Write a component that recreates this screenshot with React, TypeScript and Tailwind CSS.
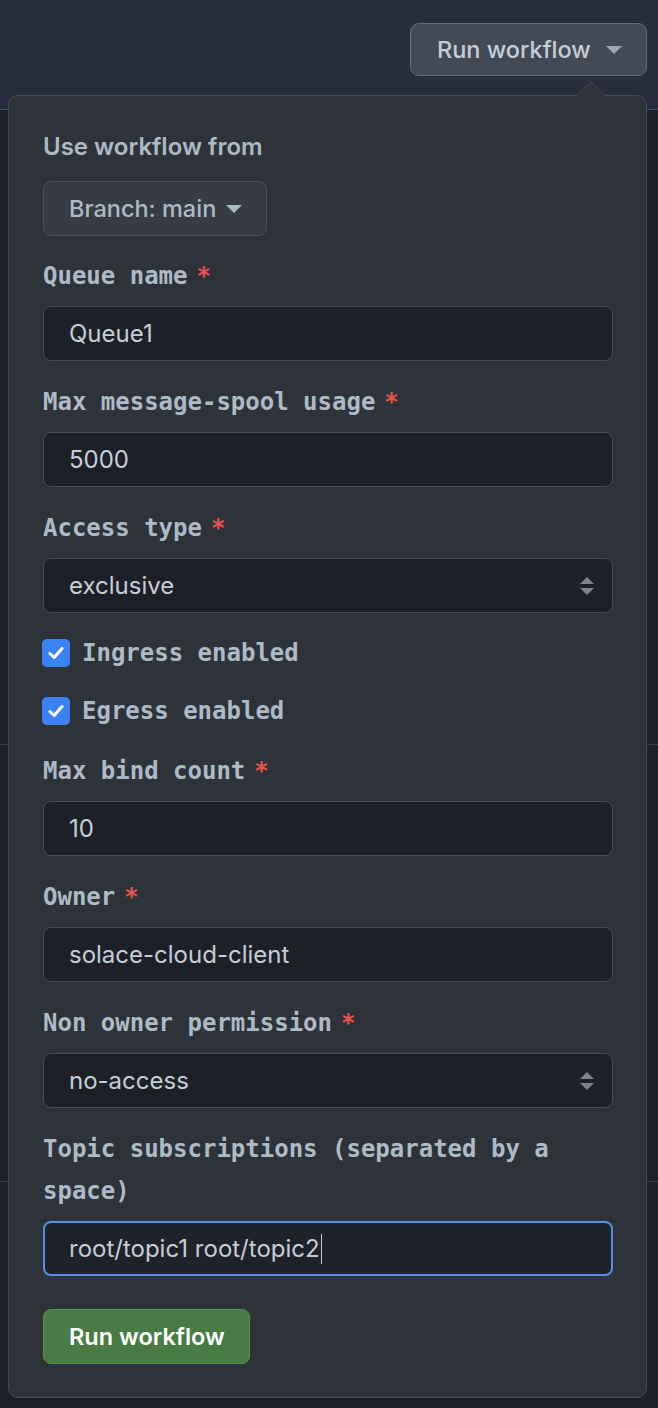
import React from "react";

const sans = { fontFamily: "Inter, 'Noto Sans', sans-serif" };
const mono = { fontFamily: "'DejaVu Sans Mono', 'Liberation Mono', monospace" };

function Caret({ className }: { className?: string }) {
  return (
    <svg width="16" height="8" viewBox="0 0 16 8" className={className}>
      <path d="M0 0 L16 0 L8 8 Z" fill="currentColor" />
    </svg>
  );
}

function Label({ text, req = true, className = "" }: { text: string; req?: boolean; className?: string }) {
  return (
    <div
      className={"text-[24px] font-bold leading-[42px] text-[#adbac7] " + className}
      style={mono}
    >
      {text}
      {req && <span className="ml-[9px] text-[#e5534b]">*</span>}
    </div>
  );
}

function TextInput({ value, className = "" }: { value: string; className?: string }) {
  return (
    <div
      className={
        "flex h-[55px] items-center rounded-[8px] border border-[#444c56] bg-[#1d2027] pl-[25px] pt-[1px] text-[24px] text-[#c5ced8] " +
        className
      }
      style={sans}
    >
      {value}
    </div>
  );
}

function SelectBox({ value, className = "" }: { value: string; className?: string }) {
  return (
    <div
      className={
        "flex h-[55px] items-center justify-between rounded-[8px] border border-[#444c56] bg-[#1d2027] pl-[25px] pr-[17px] pt-[1px] text-[24px] text-[#c5ced8] " +
        className
      }
      style={sans}
    >
      <span>{value}</span>
      <svg width="16" height="20" viewBox="0 0 16 20">
        <path d="M1 8 L8 1 L15 8 Z" fill="#7d8590" />
        <path d="M1 12 L15 12 L8 19 Z" fill="#7d8590" />
      </svg>
    </div>
  );
}

function CheckRow({ text, className = "" }: { text: string; className?: string }) {
  return (
    <div className={"flex h-[42px] items-center " + className}>
      <div className="-ml-[1px] flex h-[28px] w-[28px] items-center justify-center rounded-[5px] bg-[#3b82f6]">
        <svg width="20" height="20" viewBox="0 0 20 20">
          <path d="M4 10.5 L8.2 14.5 L16 5.5" fill="none" stroke="#ffffff" strokeWidth="3" strokeLinecap="round" strokeLinejoin="round" />
        </svg>
      </div>
      <span className="ml-[12px] text-[24px] font-bold leading-[42px] text-[#adbac7]" style={mono}>
        {text}
      </span>
    </div>
  );
}

export default function App() {
  return (
    <div className="relative h-[1408px] w-[658px] overflow-hidden bg-[#1d2127]">
      {/* header */}
      <div className="flex h-[110px] justify-end border-b border-[#3a5275] bg-[#272d3b] pr-[11px] pt-[23px]">
        <div
          className="flex h-[53px] w-[237px] items-center justify-between rounded-[9px] border border-[#646c77] bg-[#434a55] pl-[26px] pr-[24px] text-[23.5px] font-medium text-[#c5ced8]"
          style={sans}
        >
          <span>Run workflow</span>
          <Caret className="text-[#9ba6b2]" />
        </div>
      </div>
      {/* underlying page rows */}
      <div className="h-[635px] border-b border-[#3a3f47]" />
      <div className="h-[437px] border-b border-[#3a3f47]" />

      {/* dropdown panel */}
      <div className="absolute left-[8px] top-[95px] w-[639px] rounded-[10px] border border-[#454b54] bg-[#2e3239] pb-[33px] pl-[34px] pr-[33px] pt-[30px]">
        <svg width="30" height="16" viewBox="0 0 30 16" className="absolute left-[567px] top-[-15px]">
          <path d="M0 15.5 L15 0.7 L30 15.5" fill="#2e3239" stroke="#454b54" strokeWidth="1" />
          <rect x="0" y="15" width="30" height="2" fill="#2e3239" />
        </svg>

        <div className="text-[24px] font-semibold leading-[42px] text-[#adbac7]" style={sans}>
          Use workflow from
        </div>
        <div
          className="mt-[13px] flex h-[55px] w-[224px] items-center rounded-[8px] border border-[#4b5159] bg-[#373c44] pl-[25px] text-[23.5px] font-medium text-[#adbac7]"
          style={sans}
        >
          <span>Branch: main</span>
          <Caret className="ml-[10px] text-[#adbac7]" />
        </div>

        <Label text="Queue name" className="mt-[19px]" />
        <TextInput value="Queue1" className="mt-[9px]" />

        <Label text="Max message-spool usage" className="mt-[20px]" />
        <TextInput value="5000" className="mt-[9px]" />

        <Label text="Access type" className="mt-[20px]" />
        <SelectBox value="exclusive" className="mt-[9px]" />

        <CheckRow text="Ingress enabled" className="mt-[19px]" />
        <CheckRow text="Egress enabled" className="mt-[16px]" />

        <Label text="Max bind count" className="mt-[18px]" />
        <TextInput value="10" className="mt-[9px]" />

        <Label text="Owner" className="mt-[20px]" />
        <TextInput value="solace-cloud-client" className="mt-[9px]" />

        <Label text="Non owner permission" className="mt-[20px]" />
        <SelectBox value="no-access" className="mt-[9px]" />

        <Label text="Topic subscriptions (separated by a space)" req={false} className="mt-[20px]" />
        <div
          className="mt-[9px] flex h-[55px] items-center rounded-[8px] border-2 border-[#5590e6] bg-[#1f2229] pl-[24px] pt-[1px] text-[24px] text-[#c5ced8]"
          style={sans}
        >
          <span>root/topic1 root/topic2</span>
          <span className="ml-[1px] h-[30px] w-[1px] bg-[#c5ced8]" />
        </div>

        <div
          className="mt-[33px] flex h-[55px] w-[207px] items-center rounded-[8px] border border-[#5b8f52] bg-[#487c44] pl-[25px] text-[23.5px] font-semibold text-white"
          style={sans}
        >
          Run workflow
        </div>
      </div>
    </div>
  );
}
